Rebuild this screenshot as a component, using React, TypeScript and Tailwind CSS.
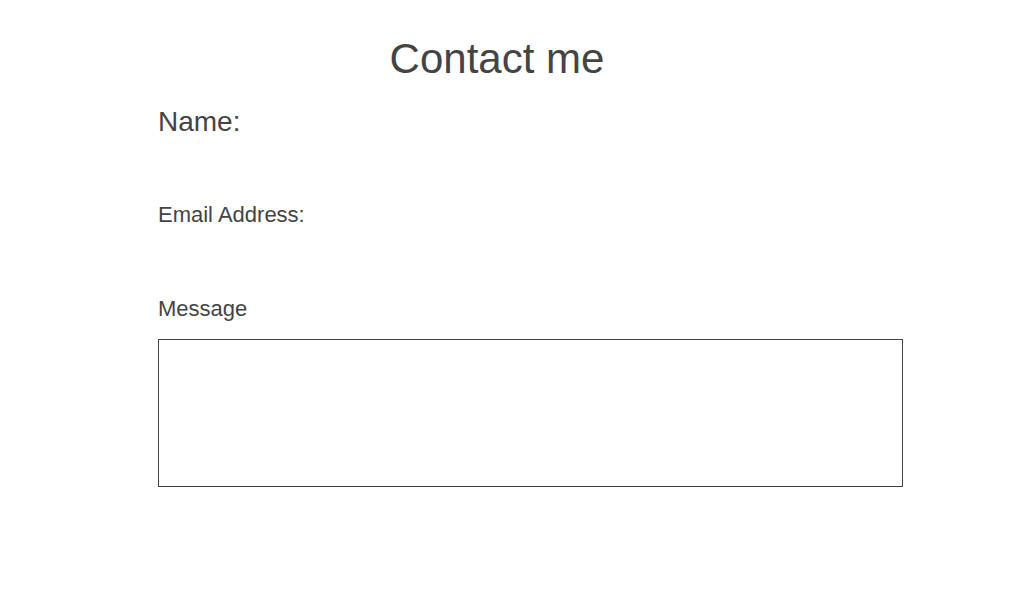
export default function App() {
  return (
    <div className="w-[1024px] h-[600px] bg-white text-[#444444] font-['Liberation_Sans',Arial,sans-serif]">
      <div className="pl-[158px] pt-[35px] flex flex-col items-start">
        <h1 className="w-[678px] text-center text-[42px] leading-[48px] font-normal">Contact me</h1>
        <label className="mt-[23px] text-[28px] leading-[32px]">Name:</label>
        <label className="mt-[64px] text-[22px] leading-[25px]">Email Address:</label>
        <label className="mt-[69px] text-[22px] leading-[25px]">Message</label>
        <textarea className="mt-[18px] w-[745px] h-[148px] border border-[#444444] bg-white resize-none outline-none" />
      </div>
    </div>
  );
}
